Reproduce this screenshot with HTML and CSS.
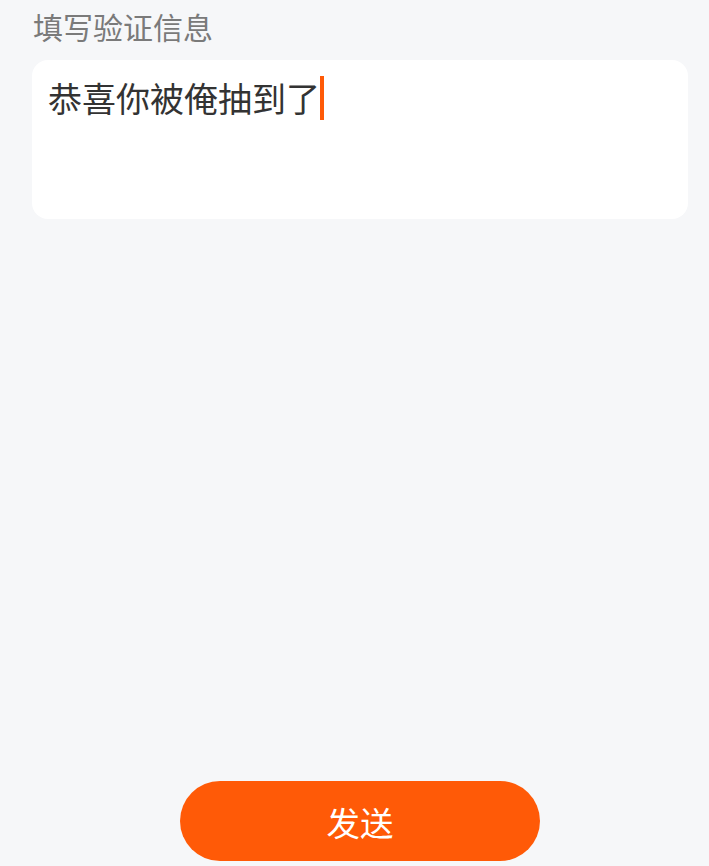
FILE: index.html
```html
<!DOCTYPE html>
<html lang="zh-CN">
<head>
    <meta charset="UTF-8">
    <meta name="viewport" content="width=device-width, initial-scale=1.0">
    <title>填写验证信息</title>
    <link rel="stylesheet" href="styles.css">
</head>
<body>
    <div class="page">
        <div class="content">
            <div class="label">填写验证信息</div>
            <div class="card">
                <span class="message">恭喜你被俺抽到了</span><span class="cursor"></span>
            </div>
        </div>
        <div class="footer">
            <button type="button" class="send-btn">发送</button>
        </div>
    </div>
</body>
</html>
```

FILE: styles.css
```css
body {
    margin: 0;
    padding: 0;
    background-color: #f6f7f9;
    font-family: "Noto Sans CJK SC", "Noto Sans", sans-serif;
}
.page {
    display: flex;
    flex-direction: column;
    min-height: 100vh;
    box-sizing: border-box;
    padding: 6px 21px 5px 32px;
}
.label {
    font-size: 30px;
    line-height: 40px;
    color: #7a7a7a;
    padding-left: 1px;
}
.card {
    margin-top: 14px;
    height: 159px;
    box-sizing: border-box;
    padding: 16px;
    background-color: #fff;
    border-radius: 16px;
    font-size: 0;
}
.message {
    font-size: 34px;
    line-height: 44px;
    color: #333;
    vertical-align: top;
}
.cursor {
    display: inline-block;
    width: 4px;
    height: 44px;
    background-color: #ff5a07;
    vertical-align: top;
}
.footer {
    margin-top: auto;
    display: flex;
    justify-content: center;
}
.send-btn {
    width: 360px;
    height: 80px;
    border: none;
    border-radius: 40px;
    background-color: #ff5a07;
    color: #fff;
    font-family: "Noto Sans CJK SC", "Noto Sans", sans-serif;
    font-size: 33.5px;
}
```
